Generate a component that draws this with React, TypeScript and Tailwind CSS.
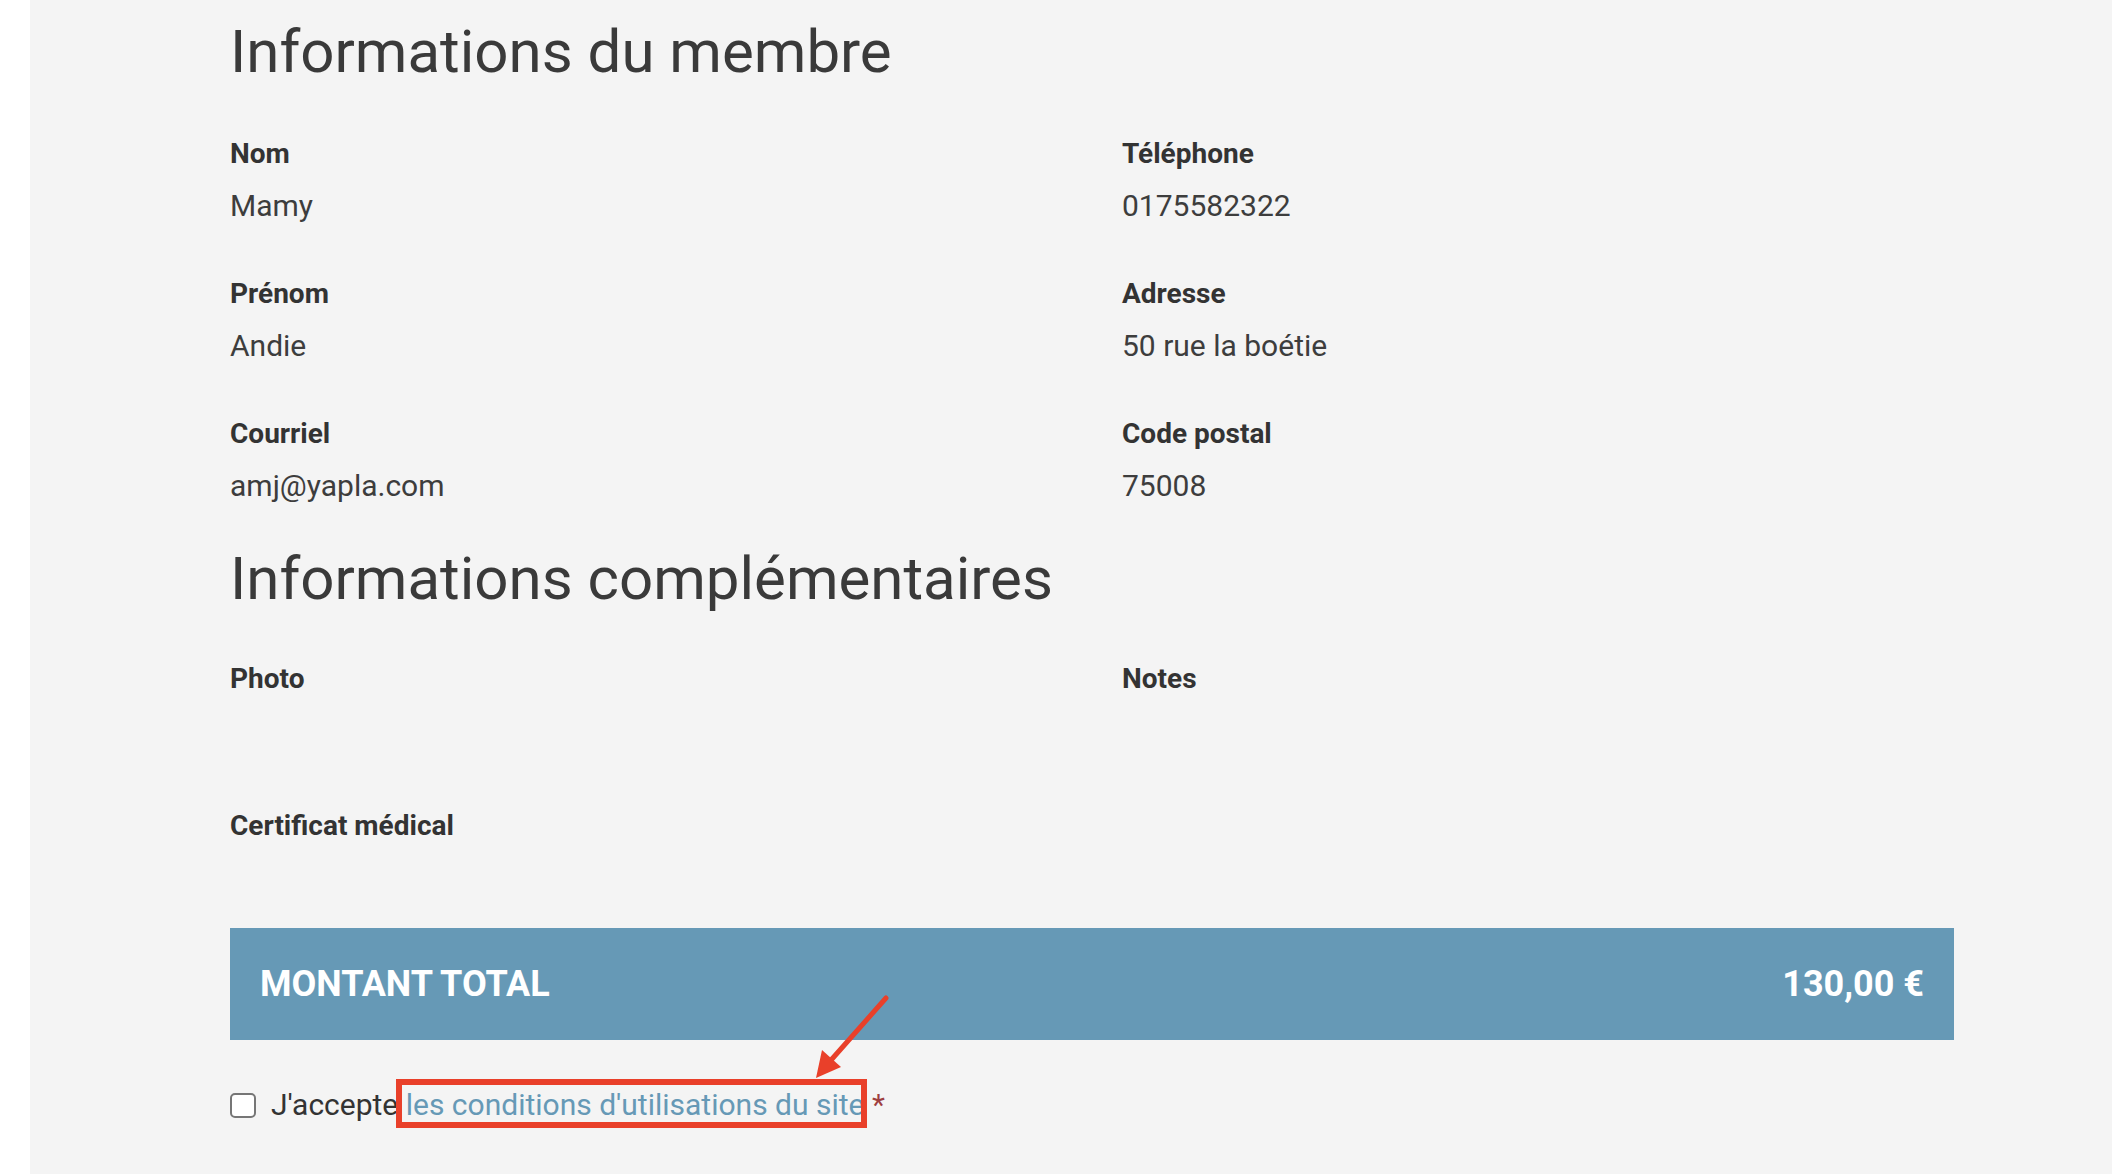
import React from "react"

type Field = {
  label: string
  value?: string
}

const memberFields: Field[] = [
  { label: "Nom", value: "Mamy" },
  { label: "Téléphone", value: "0175582322" },
  { label: "Prénom", value: "Andie" },
  { label: "Adresse", value: "50 rue la boétie" },
  { label: "Courriel", value: "amj@yapla.com" },
  { label: "Code postal", value: "75008" },
]

const extraFields: Field[] = [
  { label: "Photo" },
  { label: "Notes" },
  { label: "Certificat médical" },
]

const InfoField: React.FC<Field> = ({ label, value }) => {
  return (
    <div className="flex flex-col">
      <span className="text-[28px] leading-[32px] font-bold text-[#333333]">
        {label}
      </span>
      {value ? (
        <span className="mt-[18px] text-[30px] leading-[36px] text-[#3d3d3d]">
          {value}
        </span>
      ) : (
        <span className="mt-[18px] h-[43px]"></span>
      )}
    </div>
  )
}

// red annotation drawn over the page (box around the link + arrow)
const Annotation: React.FC = () => {
  return (
    <svg
      className="absolute top-0 left-0 pointer-events-none"
      width="2112"
      height="1174"
      viewBox="0 0 2112 1174"
    >
      <rect
        x="399"
        y="1082"
        width="465"
        height="43"
        fill="none"
        stroke="#e9402a"
        strokeWidth="6"
      />
      <line
        x1="886"
        y1="998"
        x2="832"
        y2="1059"
        stroke="#e9402a"
        strokeWidth="5"
        strokeLinecap="round"
      />
      <polygon points="816,1078 841,1067 822,1050" fill="#e9402a" />
    </svg>
  )
}

const App: React.FC = () => {
  return (
    <div
      className="relative flex h-[1174px] w-full overflow-hidden bg-white"
      style={{ fontFamily: "Roboto, 'Liberation Sans', sans-serif" }}
    >
      <div className="w-[30px] shrink-0 bg-white"></div>
      <main className="flex-1 bg-[#f4f4f4] pl-[200px] pt-[16px]">
        <div className="w-[1724px]">
          <h2 className="text-[60px] leading-[72px] font-normal text-[#3a3a3a]">
            Informations du membre
          </h2>
          <div className="mt-[50px] grid grid-cols-2 gap-x-[60px] gap-y-[54px]">
            {memberFields.map((field) => (
              <InfoField key={field.label} {...field} />
            ))}
          </div>

          <h2 className="mt-[39px] text-[60px] leading-[72px] font-normal text-[#3a3a3a]">
            Informations complémentaires
          </h2>
          <div className="mt-[48px] grid grid-cols-2 gap-x-[60px] gap-y-[54px]">
            {extraFields.map((field) => (
              <InfoField key={field.label} {...field} />
            ))}
          </div>

          <div className="mt-[25px] flex h-[112px] items-center justify-between bg-[#6699b6] px-[30px] text-[36px] font-bold text-white">
            <span>MONTANT TOTAL</span>
            <span>130,00 €</span>
          </div>

          <label className="mt-[47px] flex items-center text-[30px] leading-[36px] text-[#333333]">
            <input
              type="checkbox"
              className="h-[25px] w-[26px] shrink-0 appearance-none rounded-[5px] border-2 border-[#767676] bg-white"
            />
            <span className="ml-[15px]">
              J'accepte{" "}
              <a href="#" className="text-[#6699b6]">
                les conditions d'utilisations du site
              </a>{" "}
              <span className="text-[#9e3f3f]">*</span>
            </span>
          </label>
        </div>
      </main>
      <Annotation />
    </div>
  )
}

export default App
